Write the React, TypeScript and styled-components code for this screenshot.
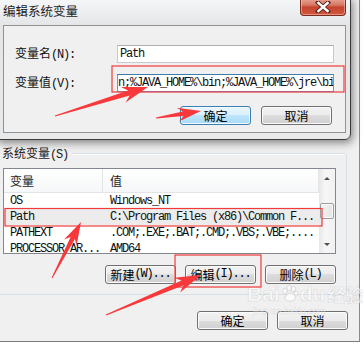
import React from "react";
import styled, { createGlobalStyle } from "styled-components";

const GlobalStyle = createGlobalStyle`
  html, body {
    margin: 0;
    padding: 0;
    background: #fff;
  }
  body {
    font-family: "Noto Sans CJK SC", "Liberation Sans", sans-serif;
    font-size: 12px;
    color: #000;
  }
`;

const Desktop = styled.div`
  position: relative;
  width: 364px;
  height: 345px;
  overflow: hidden;
  background: #fff;
`;

// mnemonic / latin parts render in a narrow mono face like SimSun
const Mn = styled.span`
  font-family: "Liberation Mono", monospace;
  font-size: 12px;
  letter-spacing: -1.2px;
`;

/* ---------- parent window: 环境变量 ---------- */

const EnvWindow = styled.div`
  box-sizing: border-box;
  width: 360px;
  height: 342px;
  padding-top: 153px;
  background: #f0f0f0;
  border-right: 1px solid #8a8a8a;
  border-bottom: 1px solid #7c7c7c;
  display: flex;
  flex-direction: column;
`;

const GroupBox = styled.div`
  box-sizing: border-box;
  margin-left: -10px;
  width: 357px;
  height: 142px;
  border: 1px solid #d5dfe5;
  border-radius: 3px;
  box-shadow: inset 1px 1px 0 #fff;
  padding: 0 10px 0 12px;
  display: flex;
  flex-direction: column;
`;

const Legend = styled.div`
  align-self: flex-start;
  margin: -9px 0 0 -1px;
  padding-right: 4px;
  height: 16px;
  line-height: 16px;
  background: #f0f0f0;
  color: #1a1a1a;
`;

const ListView = styled.div`
  box-sizing: border-box;
  margin-top: 7px;
  width: 333px;
  height: 86px;
  border: 1px solid #828790;
  background: #fff;
  display: flex;
`;

const ListMain = styled.div`
  flex: 1;
  display: flex;
  flex-direction: column;
  overflow: hidden;
`;

const ListHeader = styled.div`
  display: grid;
  grid-template-columns: 99px 1fr;
  height: 23px;
  flex-shrink: 0;
  background: linear-gradient(#ffffff, #f6f7f8);
  border-bottom: 1px solid #e3e4e6;
`;

const HeaderCell = styled.div<{ $pad: number }>`
  padding-left: ${(p) => p.$pad}px;
  line-height: 23px;
  font-size: 12px;
  color: #1e1e1e;
  border-right: 1px solid #e5e5e5;
`;

const Row = styled.div<{ $selected?: boolean }>`
  display: grid;
  grid-template-columns: 99px 1fr;
  height: 16px;
  flex-shrink: 0;
  background: ${(p) => (p.$selected ? "#ececec" : "transparent")};
`;

const Cell = styled.div<{ $pad: number }>`
  padding-left: ${(p) => p.$pad}px;
  line-height: 16px;
  font-family: "Liberation Mono", monospace;
  font-size: 12px;
  letter-spacing: -1.2px;
  white-space: nowrap;
  overflow: hidden;
  color: #111;
`;

const ScrollBar = styled.div`
  width: 16px;
  flex-shrink: 0;
  display: flex;
  flex-direction: column;
  align-items: center;
  background: linear-gradient(90deg, #e7e7e7, #f6f6f6 40%, #f1f1f1);
`;

const ScrollArrow = styled.div<{ $down?: boolean }>`
  height: 18px;
  width: 100%;
  display: flex;
  align-items: center;
  justify-content: center;
  &::after {
    content: "";
    border-left: 3px solid transparent;
    border-right: 3px solid transparent;
    ${(p) =>
      p.$down
        ? "border-top: 3px solid #505050;"
        : "border-bottom: 3px solid #505050;"}
  }
`;

const ScrollTrack = styled.div`
  flex: 1;
  width: 100%;
  display: flex;
  flex-direction: column;
  align-items: center;
`;

const Thumb = styled.div`
  box-sizing: border-box;
  margin-top: 16px;
  width: 14px;
  height: 16px;
  border: 1px solid #9c9c9c;
  border-radius: 2px;
  background: linear-gradient(90deg, #f4f4f4, #e4e4e4);
  box-shadow: inset 0 0 0 1px #fafafa;
`;

const ButtonRow = styled.div<{ $top: number; $inset: number; $gap: number }>`
  display: flex;
  justify-content: flex-end;
  gap: ${(p) => p.$gap}px;
  margin-top: ${(p) => p.$top}px;
  padding-right: ${(p) => p.$inset}px;
`;

const Button = styled.div<{ $default?: boolean }>`
  box-sizing: border-box;
  width: 71px;
  height: 19px;
  border: 1px solid ${(p) => (p.$default ? "#3c7fb1" : "#707070")};
  border-radius: 3px;
  background: ${(p) =>
    p.$default
      ? "linear-gradient(#eaf6fd 0%, #d9f0fc 50%, #bee6fd 50%, #a7d9f5 100%)"
      : "linear-gradient(#f2f2f2 0%, #ebebeb 50%, #dddddd 50%, #cfcfcf 100%)"};
  box-shadow: inset 0 0 0 1px ${(p) => (p.$default ? "#f2faff" : "#fbfbfb")};
  display: flex;
  align-items: center;
  justify-content: center;
  font-size: 12px;
  line-height: 17px;
  color: #000;
`;

/* ---------- edit dialog: 编辑系统变量 ---------- */

const EditDialog = styled.div`
  position: absolute;
  left: -6px;
  top: -3px;
  box-sizing: border-box;
  width: 357px;
  height: 143px;
  border: 1px solid #3a3a3a;
  border-radius: 0 0 6px 6px;
  background: linear-gradient(#f6f7f8, #e3e5e7 28px, #e8e9ea);
  box-shadow: 2px 3px 9px rgba(0, 0, 0, 0.45);
  padding: 0 4px 6px 8px;
  display: flex;
  flex-direction: column;
`;

const TitleBar = styled.div`
  height: 27px;
  flex-shrink: 0;
  display: flex;
  justify-content: space-between;
  align-items: flex-start;
`;

const Title = styled.div`
  padding-top: 4px;
  font-size: 12.5px;
  line-height: 18px;
  color: #1b1b1b;
`;

const CloseButton = styled.div`
  box-sizing: border-box;
  width: 46px;
  height: 18px;
  border: 1px solid #7b2b20;
  border-top: none;
  border-radius: 0 0 4px 4px;
  background: linear-gradient(#e9a99b 0%, #d67a67 40%, #c4452f 55%, #d2583f 100%);
  box-shadow: inset 0 0 0 1px rgba(255, 220, 210, 0.45);
  display: flex;
  align-items: center;
  justify-content: center;
`;

const ContentFrame = styled.div`
  flex: 1;
  box-sizing: border-box;
  border: 1px solid #929292;
  background: #f0f0f0;
  padding: 18px 11px 0 11px;
  display: flex;
  flex-direction: column;
`;

const FormGrid = styled.div`
  display: grid;
  grid-template-columns: 102px 217px;
  row-gap: 9px;
  align-items: center;
`;

const Label = styled.div`
  font-size: 12px;
  line-height: 18px;
  color: #111;
`;

const TextBox = styled.div<{ $focused?: boolean }>`
  box-sizing: border-box;
  height: 18px;
  border: 1px solid ${(p) => (p.$focused ? "#569de5" : "#c5c9d0")};
  border-top-color: ${(p) => (p.$focused ? "#3d7bad" : "#abadb3")};
  background: #fff;
  padding-left: ${(p) => (p.$focused ? 0 : 2)}px;
  line-height: 16px;
  font-family: "Liberation Mono", monospace;
  font-size: 12px;
  letter-spacing: -1.2px;
  white-space: nowrap;
  overflow: hidden;
  color: #111;
`;

/* ---------- annotation overlay ---------- */

const Overlay = styled.svg`
  position: absolute;
  left: 0;
  top: 0;
  pointer-events: none;
`;

const Watermark = styled.div`
  position: absolute;
  left: 247px;
  top: 282px;
  display: flex;
  flex-direction: column;
  align-items: flex-start;
  color: rgba(255, 255, 255, 0.6);
  -webkit-text-stroke: 0.6px rgba(160, 160, 160, 0.35);
  pointer-events: none;
`;

const MarkLine = styled.div`
  display: flex;
  align-items: center;
  font-family: "Liberation Sans", sans-serif;
  font-weight: bold;
  font-size: 21px;
  line-height: 24px;
`;

const MarkCjk = styled.span`
  font-family: "Noto Sans CJK SC", sans-serif;
  font-size: 18px;
  margin-left: 2px;
`;

const MarkUrl = styled.div`
  font-family: "Liberation Sans", sans-serif;
  font-size: 9px;
  line-height: 10px;
  margin-left: 6px;
  -webkit-text-stroke: 0.3px rgba(160, 160, 160, 0.35);
`;

const arrowPoints = (
  x0: number,
  y0: number,
  x1: number,
  y1: number,
  L: number,
  W: number,
  w: number
) => {
  const len = Math.hypot(x1 - x0, y1 - y0);
  const ux = (x1 - x0) / len;
  const uy = (y1 - y0) / len;
  const nx = -uy;
  const ny = ux;
  const bx = x1 - ux * L;
  const by = y1 - uy * L;
  const cx = x1 - ux * L * 1.3;
  const cy = y1 - uy * L * 1.3;
  const pts = [
    [x0 + nx * 0.4, y0 + ny * 0.4],
    [bx + nx * w, by + ny * w],
    [cx + nx * W, cy + ny * W],
    [x1, y1],
    [cx - nx * W, cy - ny * W],
    [bx - nx * w, by - ny * w],
    [x0 - nx * 0.4, y0 - ny * 0.4],
  ];
  return pts.map((p) => `${p[0].toFixed(1)},${p[1].toFixed(1)}`).join(" ");
};

const arrows = [
  [55, 116, 148, 87, 20, 8, 2.6],
  [156, 118, 201, 111, 18, 7, 2.4],
  [52, 278, 81, 222, 18, 7, 2.4],
  [106, 315, 201, 275, 20, 8, 2.6],
];

const marks = [
  { x: 112, y: 66, w: 232, h: 26 },
  { x: 5, y: 208.5, w: 317, h: 17.5 },
  { x: 175, y: 255, w: 86, h: 32 },
];

const rows = [
  { name: "OS", value: "Windows_NT" },
  { name: "Path", value: "C:\\Program Files (x86)\\Common F...", selected: true },
  { name: "PATHEXT", value: ".COM;.EXE;.BAT;.CMD;.VBS;.VBE;...." },
  { name: "PROCESSOR_AR...", value: "AMD64" },
];

const Paw = () => (
  <svg width="20" height="20" viewBox="0 0 20 20">
    <g fill="rgba(255,255,255,0.65)" stroke="rgba(160,160,160,0.4)" strokeWidth="0.8">
      <ellipse cx="5" cy="7" rx="2.2" ry="2.8" />
      <ellipse cx="9" cy="4" rx="2.2" ry="2.8" />
      <ellipse cx="13.5" cy="5" rx="2.2" ry="2.8" />
      <ellipse cx="16" cy="9.5" rx="2" ry="2.5" />
      <path d="M5 15 C5 10 9 9 11 9 C14 9 16 12 15 15 C14 18 6 18 5 15 Z" />
    </g>
  </svg>
);

const CloseGlyph = () => (
  <svg width="16" height="12" viewBox="0 0 16 12">
    <path d="M3 1.5 L13 10.5 M13 1.5 L3 10.5" stroke="#5a2018" strokeWidth="4.2" strokeLinecap="square" />
    <path d="M3.4 2 L12.6 10 M12.6 2 L3.4 10" stroke="#ffffff" strokeWidth="2.4" strokeLinecap="square" />
  </svg>
);

const App: React.FC = () => {
  return (
    <Desktop>
      <GlobalStyle />
      <EnvWindow>
        <GroupBox>
          <Legend>
            系统变量<Mn>(S)</Mn>
          </Legend>
          <ListView>
            <ListMain>
              <ListHeader>
                <HeaderCell $pad={6}>变量</HeaderCell>
                <HeaderCell $pad={7}>值</HeaderCell>
              </ListHeader>
              {rows.map((r) => (
                <Row key={r.name} $selected={r.selected}>
                  <Cell $pad={6}>{r.name}</Cell>
                  <Cell $pad={7}>{r.value}</Cell>
                </Row>
              ))}
            </ListMain>
            <ScrollBar>
              <ScrollArrow />
              <ScrollTrack>
                <Thumb />
              </ScrollTrack>
              <ScrollArrow $down />
            </ScrollBar>
          </ListView>
          <ButtonRow $top={11} $inset={0} $gap={9}>
            <Button>
              新建<Mn>(W)...</Mn>
            </Button>
            <Button>
              编辑<Mn>(I)...</Mn>
            </Button>
            <Button>
              删除<Mn>(L)</Mn>
            </Button>
          </ButtonRow>
        </GroupBox>
        <ButtonRow $top={16} $inset={11} $gap={9}>
          <Button>确定</Button>
          <Button>取消</Button>
        </ButtonRow>
      </EnvWindow>

      <EditDialog>
        <TitleBar>
          <Title>编辑系统变量</Title>
          <CloseButton>
            <CloseGlyph />
          </CloseButton>
        </TitleBar>
        <ContentFrame>
          <FormGrid>
            <Label>
              变量名<Mn>(N):</Mn>
            </Label>
            <TextBox>Path</TextBox>
            <Label>
              变量值<Mn>(V):</Mn>
            </Label>
            <TextBox $focused>n;%JAVA_HOME%\bin;%JAVA_HOME%\jre\bin</TextBox>
          </FormGrid>
          <ButtonRow $top={13} $inset={2} $gap={10}>
            <Button $default>确定</Button>
            <Button>取消</Button>
          </ButtonRow>
        </ContentFrame>
      </EditDialog>

      <Watermark>
        <MarkLine>
          Bai
          <Paw />
          du<MarkCjk>经验</MarkCjk>
        </MarkLine>
        <MarkUrl>jingyan.baidu.com</MarkUrl>
      </Watermark>

      <Overlay width="364" height="345" viewBox="0 0 364 345">
        {marks.map((m, i) => (
          <rect
            key={i}
            x={m.x}
            y={m.y}
            width={m.w}
            height={m.h}
            fill="none"
            stroke="#f23a3a"
            strokeWidth="1.2"
          />
        ))}
        {arrows.map((a, i) => (
          <polygon
            key={i}
            points={arrowPoints(a[0], a[1], a[2], a[3], a[4], a[5], a[6])}
            fill="#f8383a"
          />
        ))}
      </Overlay>
    </Desktop>
  );
};

export default App;
